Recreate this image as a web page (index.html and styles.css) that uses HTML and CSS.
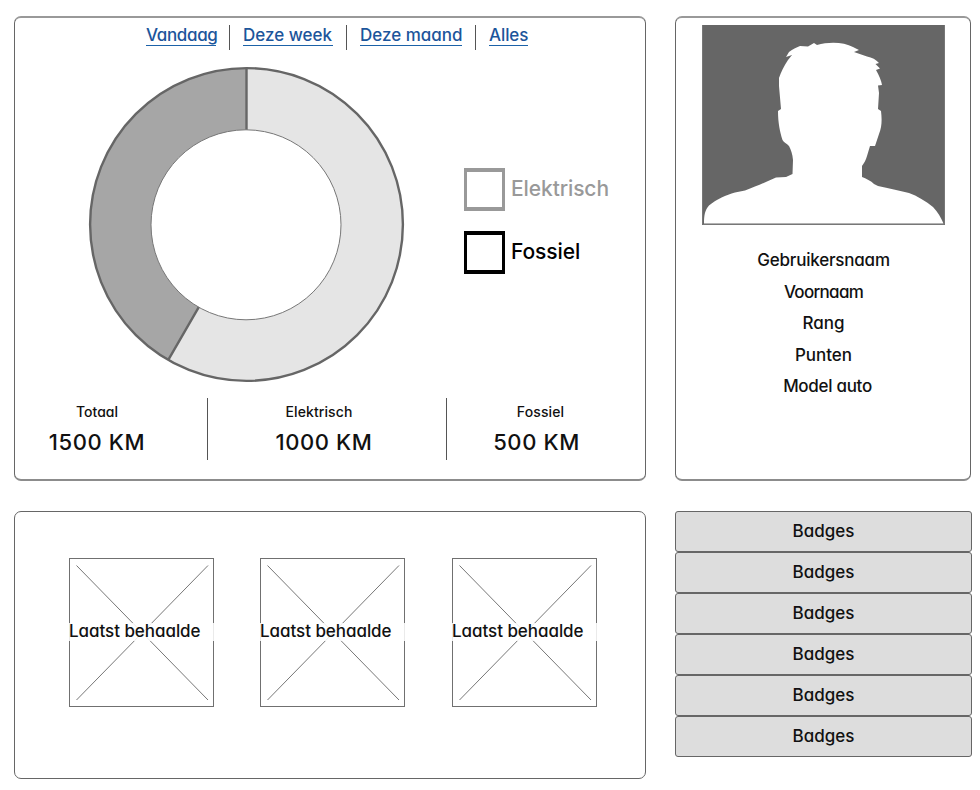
FILE: index.html
```html
<!DOCTYPE html>
<html lang="nl">
<head>
<meta charset="utf-8">
<title>Dashboard</title>
<link rel="stylesheet" href="styles.css">
</head>
<body>
<main class="dashboard">
  <section class="card usage">
    <nav class="periods">
      <a class="vandaag" href="#">Vandaag</a>
      <a class="week" href="#">Deze week</a>
      <a class="maand" href="#">Deze maand</a>
      <a class="alles" href="#">Alles</a>
    </nav>
    <div class="chart-row">
      <svg class="donut" width="318" height="318" viewBox="0 0 318 318">
        <circle cx="159.500" cy="159.500" r="156.400" fill="#e5e5e5"/>
        <path d="M159.500 159.500V3.100A156.400 156.400 0 0 0 81.300 294.900Z" fill="#a6a6a6"/>
        <path d="M159.500 3.100V159.500L81.300 294.900" fill="none" stroke="#666" stroke-width="2.400"/>
        <circle cx="159.500" cy="159.500" r="156.400" fill="none" stroke="#666" stroke-width="2.400"/>
        <circle cx="159" cy="159.800" r="95" fill="#fff" stroke="#777" stroke-width="1"/>
      </svg>
      <div class="legend">
        <div class="legend-item muted"><span class="box"></span><span class="name">Elektrisch</span></div>
        <div class="legend-item"><span class="box"></span><span class="name">Fossiel</span></div>
      </div>
    </div>
    <div class="totals">
      <div class="total first"><span class="label">Totaal</span><span class="value">1500 KM</span></div>
      <div class="total second"><span class="label">Elektrisch</span><span class="value">1000 KM</span></div>
      <div class="total third"><span class="label">Fossiel</span><span class="value">500 KM</span></div>
    </div>
  </section>

  <section class="card profile">
    <svg class="avatar" width="243" height="200" viewBox="0 0 243 200">
      <rect width="243" height="200" fill="#666"/>
      <path fill="#fff" d="M2 198.500 C2 190 3 185 7 180.500 C15 174 24 170 33 167.500 L43 165.500 C55 161 65 156.500 74 152.500 L84 152 L90.500 149 L91 135 C90.500 129 89 125 87 121 C84.500 118.500 82 117.500 80.500 115 C78 107 76 98 76 86 L79 84 L77 61 V53 C79 47 82 41 86 35 L90 30 L84 32 L87 27 C91 24 94 22.500 98 21 L106 21.500 L112 18 L115 20 C127 16.500 142 17 151 22 L157 25 L152 27 L165 31.500 C170 32.500 174 34.500 177 38 L173.500 39 L178 43.500 L174 45 C177 50 179.500 56 180 60 L176 60.500 L177 68 L176 84 L179 86 C180 94 180 102 177 109 L173 121 H168 L165 131 C164 135 162 138 160 141 V152 C164 153.500 169 156 172 159 L176 161 C187 163.500 197 165.500 207 168 C215 171 224 176 231 182 C236 187 239 193 241.500 198.500 Z"/>
      <path d="M.5 0V199.500H242.500V0" fill="none" stroke="#777"/>
    </svg>
    <ul class="details">
      <li class="username">Gebruikersnaam</li>
      <li class="firstname">Voornaam</li>
      <li>Rang</li>
      <li>Punten</li>
      <li class="model">Model auto</li>
    </ul>
  </section>

  <section class="card recent">
    <div class="tile"><svg width="145" height="149" viewBox="0 0 145 149"><path d="M7.500 7.500L139 142M139 7.500L7.500 142"/></svg><span>Laatst behaalde</span></div>
    <div class="tile"><svg width="145" height="149" viewBox="0 0 145 149"><path d="M7.500 7.500L139 142M139 7.500L7.500 142"/></svg><span>Laatst behaalde</span></div>
    <div class="tile"><svg width="145" height="149" viewBox="0 0 145 149"><path d="M7.500 7.500L139 142M139 7.500L7.500 142"/></svg><span>Laatst behaalde</span></div>
  </section>

  <section class="badges">
    <button>Badges</button>
    <button>Badges</button>
    <button>Badges</button>
    <button>Badges</button>
    <button>Badges</button>
    <button>Badges</button>
  </section>
</main>
</body>
</html>
```
FILE: styles.css
```css
* { box-sizing: border-box; }

body {
  margin: 0;
  background: #fff;
  color: #111;
  font: 500 17px/20px Inter, "Liberation Sans", sans-serif;
  font-feature-settings: "cv11", "calt" 0;
}

.dashboard {
  display: grid;
  grid-template-columns: 632px 297px;
  grid-template-rows: 465px 268px;
  gap: 30px 29px;
  padding: 16px 0 0 14px;
}

.card {
  border: 1px solid #666;
  border-radius: 7px;
}

.usage, .profile {
  border-top: 2px solid #999;
  border-bottom: 2px solid #8c8c8c;
}

.periods {
  display: flex;
  padding: 7px 0 0 118px;
}

.periods a {
  height: 25px;
  padding: 0 13px;
  color: #1c559b;
  text-decoration: none;
  white-space: nowrap;
}

.periods a + a { border-left: 1px solid #555; }

.periods a::after {
  content: "";
  display: block;
  height: 1px;
  background: #1c62a8;
}

.periods .vandaag { width: 96px; letter-spacing: -.35px; }
.periods .week { width: 117px; padding-right: 13px; }
.periods .maand { width: 129px; }
.periods .alles { letter-spacing: -.1px; }

.chart-row {
  display: flex;
  align-items: flex-start;
  padding: 15px 0 0 72px;
}

.donut { display: block; }

.legend {
  display: grid;
  gap: 20px;
  padding: 103px 0 0 59px;
}

.legend-item {
  display: flex;
  gap: 6px;
  height: 43px;
  font-size: 21px;
  line-height: 41px;
  letter-spacing: -.1px;
  color: #000;
}

.box {
  width: 41px;
  border: 3px solid currentColor;
  border-width: 4px 3px;
}

.muted { color: #999; }

.totals {
  display: flex;
  height: 62px;
  margin-top: 15px;
}

.total {
  display: flex;
  flex-direction: column;
  align-items: center;
  padding-top: 5px;
}

.total + .total { border-left: 1px solid #555; }
.first { width: 192px; padding-right: 28px; }
.second { width: 239px; padding-right: 6px; }
.third { width: 180px; }

.label {
  font-size: 14px;
  line-height: 18px;
}

.second .label { margin-right: 10px; letter-spacing: .1px; }
.third .label { margin-left: 8px; letter-spacing: .1px; }

.value {
  margin-top: 7px;
  font-size: 22px;
  line-height: 28px;
  letter-spacing: .6px;
}

.profile {
  width: 296px;
  padding: 7px 0 0 26px;
}

.avatar { display: block; }

.details {
  width: 243px;
  margin: 20px 0 0;
  padding: 0;
  list-style: none;
  line-height: 31.500px;
  text-align: center;
}

.username { letter-spacing: -.2px; }
.firstname { letter-spacing: -.7px; }
.model { padding-left: 8px; letter-spacing: -.3px; }

.recent {
  display: flex;
  gap: 47px;
  padding: 46px 0 0 54px;
}

.tile {
  position: relative;
  display: flex;
  align-items: center;
  width: 145px;
  height: 149px;
  border: 1px solid #707070;
}

.tile:first-child { margin-right: -1px; }

.tile svg {
  position: absolute;
  inset: -1px;
  fill: none;
  stroke: #777;
}

.tile span {
  position: relative;
  flex: none;
  width: 145px;
  height: 18px;
  margin: -2px -1px 0;
  line-height: 17px;
  letter-spacing: -.05px;
  background: rgba(255, 255, 255, .85);
  white-space: nowrap;
}

.badges {
  display: grid;
  grid-template-rows: repeat(6, 41px);
}

.badges button {
  padding: 0 0 2px;
  border: 1px solid #666;
  border-radius: 3px;
  background: #ddd;
  color: inherit;
  font: inherit;
  font-feature-settings: inherit;
}
```
